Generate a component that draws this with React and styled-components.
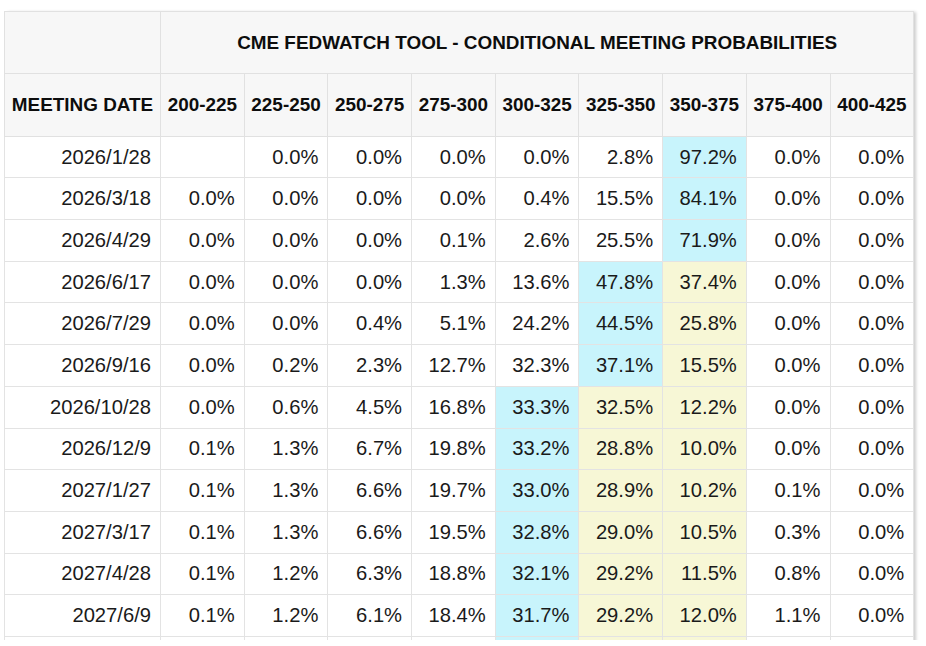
import styled, { createGlobalStyle } from 'styled-components';

const GlobalStyle = createGlobalStyle`
  html, body {
    margin: 0;
    padding: 0;
    background: #ffffff;
  }
  body {
    font-family: 'Liberation Sans', Arial, sans-serif;
    color: #1a1a1a;
  }
`;

const RANGES = [
  '200-225',
  '225-250',
  '250-275',
  '275-300',
  '300-325',
  '325-350',
  '350-375',
  '375-400',
  '400-425',
];

// cyan = most likely range, yellow = next ranges
const ROWS = [
  { date: '2026/1/28', values: ['', '0.0', '0.0', '0.0', '0.0', '2.8', '97.2', '0.0', '0.0'], cyan: 6, yellow: [] },
  { date: '2026/3/18', values: ['0.0', '0.0', '0.0', '0.0', '0.4', '15.5', '84.1', '0.0', '0.0'], cyan: 6, yellow: [] },
  { date: '2026/4/29', values: ['0.0', '0.0', '0.0', '0.1', '2.6', '25.5', '71.9', '0.0', '0.0'], cyan: 6, yellow: [] },
  { date: '2026/6/17', values: ['0.0', '0.0', '0.0', '1.3', '13.6', '47.8', '37.4', '0.0', '0.0'], cyan: 5, yellow: [6] },
  { date: '2026/7/29', values: ['0.0', '0.0', '0.4', '5.1', '24.2', '44.5', '25.8', '0.0', '0.0'], cyan: 5, yellow: [6] },
  { date: '2026/9/16', values: ['0.0', '0.2', '2.3', '12.7', '32.3', '37.1', '15.5', '0.0', '0.0'], cyan: 5, yellow: [6] },
  { date: '2026/10/28', values: ['0.0', '0.6', '4.5', '16.8', '33.3', '32.5', '12.2', '0.0', '0.0'], cyan: 4, yellow: [5, 6] },
  { date: '2026/12/9', values: ['0.1', '1.3', '6.7', '19.8', '33.2', '28.8', '10.0', '0.0', '0.0'], cyan: 4, yellow: [5, 6] },
  { date: '2027/1/27', values: ['0.1', '1.3', '6.6', '19.7', '33.0', '28.9', '10.2', '0.1', '0.0'], cyan: 4, yellow: [5, 6] },
  { date: '2027/3/17', values: ['0.1', '1.3', '6.6', '19.5', '32.8', '29.0', '10.5', '0.3', '0.0'], cyan: 4, yellow: [5, 6] },
  { date: '2027/4/28', values: ['0.1', '1.2', '6.3', '18.8', '32.1', '29.2', '11.5', '0.8', '0.0'], cyan: 4, yellow: [5, 6] },
  { date: '2027/6/9', values: ['0.1', '1.2', '6.1', '18.4', '31.7', '29.2', '12.0', '1.1', '0.0'], cyan: 4, yellow: [5, 6] },
  // the next row only peeks in at the bottom edge
  { date: '', values: ['', '', '', '', '', '', '', '', ''], cyan: 4, yellow: [5, 6] },
];

const TONES = {
  cyan: '#c8f4fc',
  yellow: '#f7f7d6',
  plain: '#ffffff',
};

function App() {
  return (
    <>
      <GlobalStyle />
      <Viewport>
        <Sheet>
          <colgroup>
            <DateCol />
            {RANGES.map((r) => (
              <RangeCol key={r} />
            ))}
          </colgroup>
          <thead>
            <TitleRow>
              <HeadCell />
              <HeadCell colSpan={RANGES.length}>
                CME FEDWATCH TOOL - CONDITIONAL MEETING PROBABILITIES
              </HeadCell>
            </TitleRow>
            <LabelRow>
              <HeadCell>MEETING DATE</HeadCell>
              {RANGES.map((r) => (
                <HeadCell key={r}>{r}</HeadCell>
              ))}
            </LabelRow>
          </thead>
          <tbody>
            {ROWS.map((row, n) => (
              <DataRow key={n}>
                <Cell>{row.date}</Cell>
                {row.values.map((v, i) => {
                  let tone = 'plain';
                  if (i === row.cyan) tone = 'cyan';
                  else if (row.yellow.includes(i)) tone = 'yellow';
                  return (
                    <Cell key={i} $tone={tone}>
                      {v ? v + '%' : ''}
                    </Cell>
                  );
                })}
              </DataRow>
            ))}
          </tbody>
        </Sheet>
      </Viewport>
    </>
  );
}

const Viewport = styled.div`
  width: 926px;
  height: 640px;
  overflow: hidden;
  padding: 11px 0 0 4px;
  box-sizing: border-box;
`;

const Sheet = styled.table`
  width: 910px;
  table-layout: fixed;
  border-collapse: collapse;
  box-shadow: 3px 0 3px -1px rgba(0, 0, 0, 0.2);
`;

const DateCol = styled.col`
  width: 156px;
`;

const RangeCol = styled.col`
  width: 83.7px;
`;

const HeadCell = styled.th`
  background: #f7f7f7;
  border: 1px solid #e1e1e1;
  font-size: 18.9px;
  font-weight: bold;
  color: #0d0d0d;
  text-align: center;
  vertical-align: middle;
  padding: 0;
  white-space: nowrap;
`;

const TitleRow = styled.tr`
  height: 62px;
`;

const LabelRow = styled.tr`
  height: 62.7px;
`;

const DataRow = styled.tr`
  height: 41.7px;
`;

const Cell = styled.td`
  background: ${(p) => TONES[p.$tone] || TONES.plain};
  border: 1px solid #e3e3e3;
  font-size: 20.2px;
  color: #1a1a1a;
  text-align: right;
  vertical-align: middle;
  padding: 0 9px 0 0;
  white-space: nowrap;
`;

export default App;
